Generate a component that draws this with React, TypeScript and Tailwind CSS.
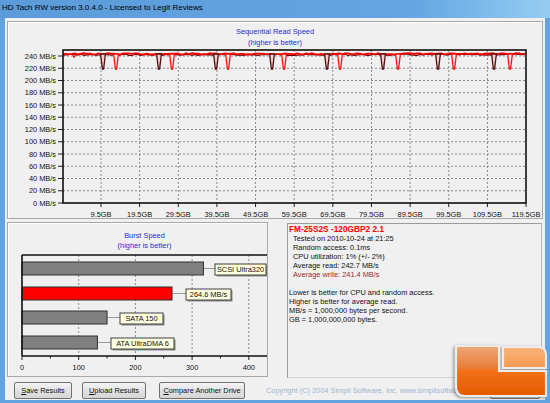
import React from 'react';

// HD Tach result window

const font = "font-['Liberation_Sans',Arial,sans-serif]";

const yLabels = [240, 220, 200, 180, 160, 140, 120, 100, 80, 60, 40, 20, 0];
const xLabels = ['9.5GB', '19.5GB', '29.5GB', '39.5GB', '49.5GB', '59.5GB', '69.5GB', '79.5GB', '89.5GB', '99.5GB', '109.5GB', '119.5GB'];
const darkDips = [95, 151, 208, 264, 319, 375, 430, 486];
const redDips = [108, 164, 220, 276, 332, 390, 446, 502];

const yOf = (v: number) => 155 - v * 0.6125;

function mainLine(seed: number, base: number) {
  let s = seed;
  const rnd = () => {
    s = (s * 9301 + 49297) % 233280;
    return s / 233280;
  };
  const pts: string[] = [];
  for (let x = 55; x <= 518; x += 3) {
    pts.push(`${x},${(base + (rnd() - 0.5) * 1.4).toFixed(2)}`);
  }
  return pts.join(' ');
}

const dipPath = (x: number) => `M${x - 2.4},6 L${x - 0.6},21 L${x + 0.6},21 L${x + 2.4},6 Z`;

const SeqChart: React.FC = () => (
  <svg width={534} height={170} className="block">
    {/* horizontal grid */}
    {yLabels.slice(0, 12).map((v) => (
      <line key={v} x1={55} x2={518} y1={yOf(v)} y2={yOf(v)} stroke="#8a8a8a" strokeWidth={1} strokeDasharray="2 2" />
    ))}
    {/* vertical grid */}
    {xLabels.slice(0, 11).map((_, k) => (
      <line key={k} x1={93 + 38.64 * k} x2={93 + 38.64 * k} y1={2} y2={155} stroke="#8a8a8a" strokeWidth={1} strokeDasharray="2 2" />
    ))}
    {/* y ticks + labels */}
    {yLabels.map((v) => (
      <g key={v}>
        <line x1={50} x2={55} y1={yOf(v)} y2={yOf(v)} stroke="#202020" strokeWidth={1} />
        <text x={48} y={yOf(v) + 2.6} textAnchor="end" fontSize={7.4} fill="#101010" fontFamily="Liberation Sans, Arial, sans-serif">
          {v} MB/s
        </text>
      </g>
    ))}
    {/* x ticks + labels */}
    {xLabels.map((l, k) => (
      <g key={l}>
        <line x1={93 + 38.64 * k} x2={93 + 38.64 * k} y1={155} y2={159} stroke="#202020" strokeWidth={1} />
        <text x={93 + 38.64 * k} y={168.5} textAnchor="middle" fontSize={7.4} fill="#101010" fontFamily="Liberation Sans, Arial, sans-serif">
          {l}
        </text>
      </g>
    ))}
    {/* data */}
    <polyline points={mainLine(7, 6.8)} fill="none" stroke="#6a0000" strokeWidth={1.2} />
    <polyline points={mainLine(13, 5.9)} fill="none" stroke="#f00000" strokeWidth={1.8} />
    <path d="M64,6 L66,9.5 L68,6" fill="none" stroke="#e00000" strokeWidth={1} />
    {darkDips.map((x) => (
      <path key={x} d={dipPath(x)} fill="#e8d2d2" stroke="#5a0a0a" strokeWidth={1.3} />
    ))}
    {redDips.map((x) => (
      <path key={x} d={dipPath(x)} fill="#fbeeee" stroke="#ff1010" strokeWidth={1.3} />
    ))}
    {/* frame */}
    <rect x={55} y={2} width={463} height={153} fill="none" stroke="#101010" strokeWidth={1.6} />
  </svg>
);

const bx = (v: number) => 14 + v * 0.567;

const bars = [
  { y: 11, v: 320, fill: '#808080', label: 'SCSI Ultra320', lx: 207, lw: 51 },
  { y: 36, v: 264.6, fill: '#ff0000', label: '264.6 MB/s', lx: 178, lw: 45 },
  { y: 60, v: 150, fill: '#808080', label: 'SATA 150', lx: 112, lw: 43 },
  { y: 85, v: 133, fill: '#808080', label: 'ATA UltraDMA 6', lx: 103, lw: 63 },
];

const BurstChart: React.FC = () => (
  <svg width={259} height={125} className="block overflow-hidden">
    {[100, 200, 300, 400].map((v) => (
      <line key={v} x1={bx(v)} x2={bx(v)} y1={4} y2={105} stroke="#8a8a8a" strokeWidth={1} strokeDasharray="2 2" />
    ))}
    {[0, 50, 100, 150, 200, 250, 300, 350, 400, 450].map((v) => (
      <line key={v} x1={bx(v)} x2={bx(v)} y1={105} y2={v % 100 === 0 ? 109 : 107.5} stroke="#202020" strokeWidth={1} />
    ))}
    {[0, 100, 200, 300, 400].map((v) => (
      <text key={v} x={bx(v)} y={118.5} textAnchor="middle" fontSize={7.4} fill="#101010" fontFamily="Liberation Sans, Arial, sans-serif">
        {v}
      </text>
    ))}
    {bars.map((b) => (
      <g key={b.label}>
        <line x1={bx(b.v)} x2={b.lx} y1={b.y + 6.5} y2={b.y + 6.5} stroke="#9a9a9a" strokeWidth={1} />
        <rect x={14} y={b.y} width={bx(b.v) - 14} height={13} fill={b.fill} stroke="#303030" strokeWidth={1} />
        <rect x={b.lx + 1.5} y={b.y + 3.5} width={b.lw} height={11} fill="#8c8c8c" />
        <rect x={b.lx} y={b.y + 2} width={b.lw} height={11} fill="#ffffe1" stroke="#404040" strokeWidth={1} />
        <text x={b.lx + b.lw / 2} y={b.y + 10.3} textAnchor="middle" fontSize={7.4} fill="#101010" fontFamily="Liberation Sans, Arial, sans-serif">
          {b.label}
        </text>
      </g>
    ))}
    <line x1={14} x2={259} y1={4} y2={4} stroke="#101010" strokeWidth={1.6} />
    <line x1={14} x2={259} y1={105} y2={105} stroke="#101010" strokeWidth={1.6} />
    <line x1={14} x2={14} y1={4} y2={105} stroke="#101010" strokeWidth={1.6} />
  </svg>
);

const Logo: React.FC = () => (
  <svg width={102} height={61} className="absolute left-[448px] top-[342px]">
    <defs>
      <linearGradient id="lg" x1="0" y1="0" x2="0" y2="1">
        <stop offset="0" stopColor="#eea677" />
        <stop offset="0.42" stopColor="#e8803c" />
        <stop offset="0.5" stopColor="#f27018" />
        <stop offset="1" stopColor="#e45a00" />
      </linearGradient>
      <linearGradient id="lb" x1="0" y1="0" x2="0" y2="1">
        <stop offset="0" stopColor="#f9b47a" />
        <stop offset="1" stopColor="#f59a50" />
      </linearGradient>
      <filter id="sh" x="-20%" y="-20%" width="140%" height="140%">
        <feDropShadow dx="-1.5" dy="1" stdDeviation="1.6" floodColor="#404040" floodOpacity="0.55" />
      </filter>
    </defs>
    <g filter="url(#sh)">
      <path d="M10,4 L51,4 L51,29 L98,29 L98,54 L17,54 Q8,54 8,45 L8,6 Q8,4 10,4 Z" fill="url(#lg)" stroke="#ececec" strokeWidth={2.2} />
      <path d="M55,5 L90,5 Q98,5 98,13 L98,26 L55,26 Z" fill="url(#lb)" stroke="#ececec" strokeWidth={2.2} />
    </g>
  </svg>
);

const Btn: React.FC<{ w: string; first: string; rest: string }> = ({ w, first, rest }) => (
  <div className={`${w} h-[17px] flex items-center justify-center rounded-[2px] border border-[#707070] bg-[linear-gradient(#f4f4f4,#e2e2e2_50%,#d6d6d6)] text-[7.4px] text-[#101010]`}>
    <span className="underline">{first}</span>
    {rest}
  </div>
);

const App: React.FC = () => {
  return (
    <div className={`relative w-[550px] h-[403px] overflow-hidden flex flex-col bg-[#62a4e0] ${font}`}>
      <div className="h-[18px] shrink-0 flex items-center pl-[2px] pb-[2px] text-[8px] text-black bg-[linear-gradient(to_right,#5b9bd9_0%,#63a6e2_75%,#96ccf2_100%)]">
        HD Tach RW version 3.0.4.0 - Licensed to Legit Reviews
      </div>

      <div className="mx-[5px] mb-[3px] flex-1 flex flex-col bg-[#f0f0f0] px-[2px] pt-[3px]">
        {/* sequential read */}
        <div className="h-[198px] border border-[#a8a8a8] shadow-[inset_1px_1px_0_#ffffff]">
          <div className="pt-[4px] text-center text-[7.4px] leading-[11px] text-[#2a2ad0]">
            <div>Sequential Read Speed</div>
            <div>(higher is better)</div>
          </div>
          <SeqChart />
        </div>

        <div className="mt-[3px] flex h-[156px]">
          {/* burst */}
          <div className="w-[261px] h-[155px] border border-[#a8a8a8] shadow-[inset_1px_1px_0_#ffffff] overflow-hidden">
            <div className="pt-[8px] pl-[14px] text-center text-[7.4px] leading-[10px] text-[#2a2ad0]">
              <div>Burst Speed</div>
              <div>(higher is better)</div>
            </div>
            <BurstChart />
          </div>

          {/* info */}
          <div className="ml-[19px] mt-[1px] w-[255px] h-[155px] border border-[#9a9a9a] border-r-[#b8b8b8] border-b-[#d0d0d0] pt-[1px] text-[7.4px] leading-[9px] text-[#101010]">
            <div className="pl-[1px] text-[8.3px] font-bold text-[#ff0000]">FM-25S2S -120GBP2 2.1</div>
            <div className="pl-[5px]">
              <div>Tested on 2010-10-24 at 21:25</div>
              <div>Random access: 0.1ms</div>
              <div>CPU utilization: 1% (+/- 2%)</div>
              <div>Average read: 242.7 MB/s</div>
              <div className="text-[#a02828]">Average write: 241.4 MB/s</div>
            </div>
            <div className="h-[9px]" />
            <div className="pl-[1px]">
              <div>Lower is better for CPU and random access.</div>
              <div>Higher is better for average read.</div>
              <div>MB/s = 1,000,000 bytes per second.</div>
              <div>GB = 1,000,000,000 bytes.</div>
            </div>
          </div>
        </div>

        {/* buttons */}
        <div className="mt-[4px] flex items-center pl-[7px]">
          <Btn w="w-[58px]" first="S" rest="ave Results" />
          <div className="ml-[10px]">
            <Btn w="w-[64px]" first="U" rest="pload Results" />
          </div>
          <div className="ml-[13px]">
            <Btn w="w-[86px]" first="C" rest="ompare Another Drive" />
          </div>
          <div className="ml-[21px] text-[7.4px] text-[#9fb4cf] whitespace-nowrap">
            Copyright (C) 2004 Simpli Software, Inc. www.simplisoftware.com
          </div>
          <div className="ml-auto mr-[3px]">
            <Btn w="w-[50px]" first="E" rest="xit" />
          </div>
        </div>
      </div>

      <Logo />
    </div>
  );
};

export default App;
